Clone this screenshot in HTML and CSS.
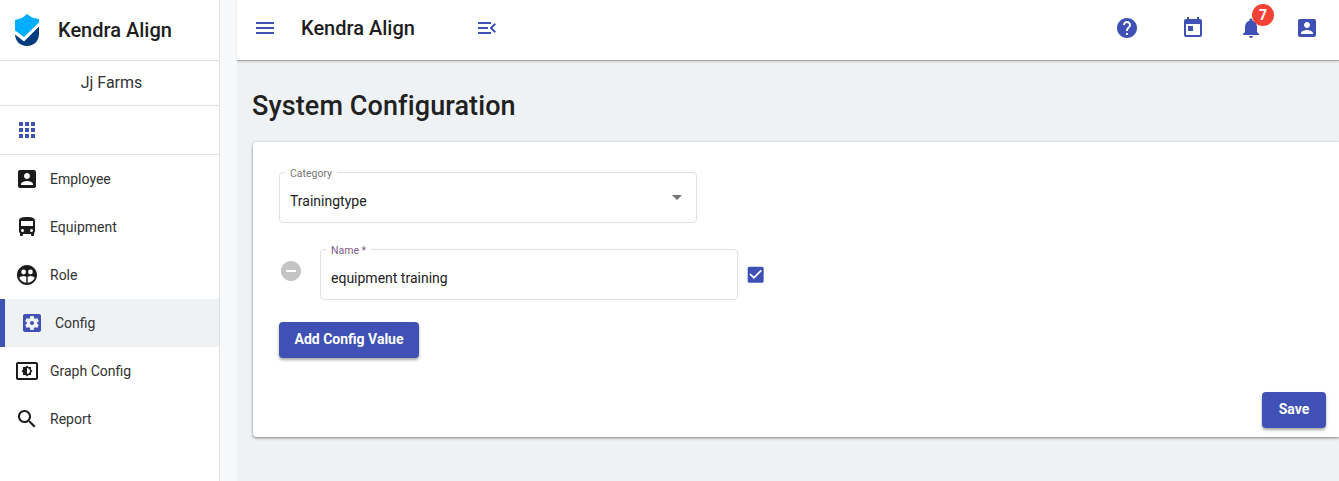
FILE: index.html
```html
<!DOCTYPE html>
<html lang="en">
<head>
<meta charset="utf-8">
<title>System Configuration</title>
<link rel="stylesheet" href="styles.css">
</head>
<body>
<div class="app">
  <aside class="sidebar">
    <div class="brand">
      <svg class="logo" viewBox="0 0 24 32"><path fill="#00aeff" d="M12 0l5 3.500 7 1.500v3.500L9 23 0 16.500V6l7-2z"/><path fill="#003b7d" d="M0 20.500l9 7L24 12.500V20c0 7-5 12-12 12S0 27 0 20z"/></svg>
      <span class="brand-name">Kendra Align</span>
    </div>
    <div class="farm">Jj Farms</div>
    <div class="apps"><svg class="icon indigo" viewBox="0 0 24 24"><path d="M4 8h4V4H4v4zm6 12h4v-4h-4v4zm-6 0h4v-4H4v4zm0-6h4v-4H4v4zm6 0h4v-4h-4v4zm6-10v4h4V4h-4zm-6 4h4V4h-4v4zm6 6h4v-4h-4v4zm0 6h4v-4h-4v4z"/></svg></div>
    <nav class="nav">
      <a class="nav-item"><svg class="icon" viewBox="0 0 24 24"><path d="M3 5v14c0 1.100.89 2 2 2h14c1.100 0 2-.9 2-2V5c0-1.100-.9-2-2-2H5c-1.110 0-2 .9-2 2zm12 4c0 1.660-1.340 3-3 3s-3-1.340-3-3 1.340-3 3-3 3 1.340 3 3zm-9 8c0-2 4-3.100 6-3.100s6 1.100 6 3.100v1H6v-1z"/></svg><span>Employee</span></a>
      <a class="nav-item"><svg class="icon" viewBox="0 0 24 24"><path d="M4 16c0 .88.39 1.670 1 2.220V20c0 .55.45 1 1 1h1c.55 0 1-.45 1-1v-1h8v1c0 .55.45 1 1 1h1c.55 0 1-.45 1-1v-1.780c.61-.55 1-1.340 1-2.220V6c0-3.500-3.580-4-8-4s-8 .5-8 4v10zm3.500 1c-.83 0-1.500-.67-1.500-1.500S6.670 14 7.500 14s1.500.67 1.500 1.500S8.330 17 7.500 17zm9 0c-.83 0-1.500-.67-1.500-1.500s.67-1.500 1.500-1.500 1.500.67 1.500 1.500-.67 1.500-1.500 1.500zm1.500-6H6V6h12v5z"/></svg><span>Equipment</span></a>
      <a class="nav-item"><svg class="icon" viewBox="0 0 24 24"><path d="M12 2C6.480 2 2 6.480 2 12s4.480 10 10 10 10-4.480 10-10S17.520 2 12 2zM8.600 6.600a2.400 2.400 0 1 1 0 4.800 2.400 2.400 0 0 1 0-4.800zm6.800 0a2.400 2.400 0 1 1 0 4.800 2.400 2.400 0 0 1 0-4.800zM4.300 15c.7-1.200 2.600-1.900 4.200-1.900 1 0 2 .2 2.800.7v6c-3.200-.3-5.800-2.300-7-4.800zm8.400 4.800v-6c.8-.5 1.800-.7 2.800-.7 1.600 0 3.500.7 4.200 1.900-1.200 2.500-3.800 4.500-7 4.800z"/></svg><span>Role</span></a>
      <a class="nav-item active"><svg class="icon indigo" viewBox="0 0 24 24"><path d="M12 10c-1.100 0-2 .9-2 2s.9 2 2 2 2-.9 2-2-.9-2-2-2zm7-7H5c-1.110 0-2 .9-2 2v14c0 1.100.89 2 2 2h14c1.110 0 2-.9 2-2V5c0-1.100-.89-2-2-2zm-1.750 9c0 .23-.02.46-.05.68l1.480 1.160c.13.11.17.3.08.45l-1.400 2.420c-.09.15-.27.21-.43.15l-1.740-.7c-.36.28-.76.51-1.180.69l-.26 1.850c-.03.17-.18.3-.35.3h-2.800c-.17 0-.32-.13-.35-.29l-.26-1.850c-.43-.18-.82-.41-1.180-.69l-1.740.7c-.16.06-.34 0-.43-.15l-1.400-2.420c-.09-.15-.05-.34.08-.45l1.480-1.160c-.03-.23-.05-.46-.05-.69 0-.23.02-.46.05-.68l-1.480-1.160c-.13-.11-.17-.3-.08-.45l1.400-2.420c.09-.15.27-.21.43-.15l1.740.7c.36-.28.76-.51 1.180-.69l.26-1.850c.03-.17.18-.3.35-.3h2.800c.17 0 .32.13.35.29l.26 1.850c.43.18.82.41 1.180.69l1.740-.7c.16-.06.34 0 .43.15l1.400 2.420c.09.15.05.34-.08.45l-1.480 1.160c.03.23.05.46.05.69z"/></svg><span>Config</span></a>
      <a class="nav-item"><svg class="icon" viewBox="0 0 24 24"><path d="M21 3H3c-1.110 0-2 .89-2 2v14c0 1.110.89 2 2 2h18c1.110 0 2-.89 2-2V5c0-1.110-.89-2-2-2zm0 16.020H3V4.980h18v14.040zM8 16h2.500l1.500 1.500 1.500-1.500H16v-2.500l1.500-1.500-1.500-1.500V8h-2.500L12 6.500 10.500 8H8v2.500L6.500 12 8 13.500V16zm4-7c1.660 0 3 1.340 3 3s-1.340 3-3 3V9z"/></svg><span>Graph Config</span></a>
      <a class="nav-item"><svg class="icon" viewBox="0 0 24 24"><path d="M15.500 14h-.79l-.28-.27C15.410 12.590 16 11.110 16 9.500 16 5.910 13.090 3 9.500 3S3 5.910 3 9.500 5.910 16 9.500 16c1.610 0 3.090-.59 4.230-1.570l.27.28v.79l5 4.990L20.490 19l-4.990-5zm-6 0C7.010 14 5 11.990 5 9.500S7.010 5 9.500 5 14 7.010 14 9.500 11.990 14 9.500 14z"/></svg><span>Report</span></a>
    </nav>
  </aside>
  <div class="gutter"></div>
  <div class="main">
    <header class="topbar">
      <svg class="icon indigo menu" viewBox="0 0 24 24"><path d="M3 18h18v-2H3v2zm0-5h18v-2H3v2zm0-7v2h18V6H3z"/></svg>
      <span class="top-title">Kendra Align</span>
      <svg class="icon indigo collapse" viewBox="0 0 24 24"><path d="M3 18h13v-2H3v2zm0-5h10v-2H3v2zm0-7v2h13V6H3zm18 9.590L17.420 12 21 8.410 19.590 7l-5 5 5 5L21 15.590z"/></svg>
      <div class="top-actions">
        <svg class="icon indigo" viewBox="0 0 24 24"><path d="M12 2C6.480 2 2 6.480 2 12s4.480 10 10 10 10-4.480 10-10S17.520 2 12 2zm1 17h-2v-2h2v2zm2.070-7.750l-.9.92C13.450 12.900 13 13.500 13 15h-2v-.5c0-1.100.45-2.100 1.170-2.830l1.240-1.260c.37-.36.59-.86.59-1.410 0-1.100-.9-2-2-2s-2 .9-2 2H8c0-2.210 1.790-4 4-4s4 1.790 4 4c0 .88-.36 1.680-.93 2.250z"/></svg>
        <svg class="icon indigo action-today" viewBox="0 0 24 24"><path d="M19 3h-1V1h-2v2H8V1H6v2H5c-1.110 0-1.990.9-1.990 2L3 19c0 1.100.89 2 2 2h14c1.100 0 2-.9 2-2V5c0-1.100-.9-2-2-2zm0 16H5V8h14v11zM7 10h5v5H7z"/></svg>
        <div class="bell"><svg class="icon indigo" viewBox="0 0 24 24"><path d="M12 22c1.100 0 2-.9 2-2h-4c0 1.100.89 2 2 2zm6-6v-5c0-3.070-1.640-5.640-4.500-6.320V4c0-.83-.67-1.500-1.500-1.500s-1.500.67-1.500 1.500v.68C7.630 5.360 6 7.920 6 11v5l-2 2v1h16v-1l-2-2z"/></svg><span class="badge">7</span></div>
        <svg class="icon indigo action-account" viewBox="0 0 24 24"><path d="M3 5v14c0 1.100.89 2 2 2h14c1.100 0 2-.9 2-2V5c0-1.100-.9-2-2-2H5c-1.110 0-2 .9-2 2zm12 4c0 1.660-1.340 3-3 3s-3-1.340-3-3 1.340-3 3-3 3 1.340 3 3zm-9 8c0-2 4-3.100 6-3.100s6 1.100 6 3.100v1H6v-1z"/></svg>
      </div>
    </header>
    <main class="content">
      <h1 class="page-title">System Configuration</h1>
      <section class="card">
        <div class="field category">
          <label class="field-label">Category</label>
          <span class="value">Trainingtype</span>
          <span class="caret"></span>
        </div>
        <div class="value-row">
          <svg class="icon remove" viewBox="0 0 24 24"><path d="M12 2C6.480 2 2 6.480 2 12s4.480 10 10 10 10-4.480 10-10S17.520 2 12 2zm5 11H7v-2h10v2z"/></svg>
          <div class="field name">
            <label class="field-label">Name *</label>
            <span class="value">equipment training</span>
          </div>
          <svg class="icon indigo check" viewBox="0 0 24 24"><path d="M19 3H5c-1.110 0-2 .9-2 2v14c0 1.100.89 2 2 2h14c1.110 0 2-.9 2-2V5c0-1.100-.89-2-2-2zm-9 14l-5-5 1.410-1.410L10 14.170l7.590-7.590L19 8l-9 9z"/></svg>
        </div>
        <button class="btn add">Add Config Value</button>
        <div class="card-footer"><button class="btn save">Save</button></div>
      </section>
    </main>
  </div>
</div>
</body>
</html>
```

FILE: styles.css
```css
* { box-sizing: border-box; }
html, body { margin: 0; height: 100%; overflow: hidden; }
body { font-family: Roboto, "Liberation Sans", sans-serif; color: #212121; background: #fff; }
.app { display: flex; height: 481px; }
.icon { width: 24px; height: 24px; fill: #1b1b1b; flex: none; display: block; }
.icon.indigo { fill: #3f51b5; }

.sidebar { width: 220px; flex: none; background: #fff; border-right: 1px solid #e0e0e0; }
.brand { height: 61px; border-bottom: 1px solid #e0e0e0; display: flex; align-items: center; padding-left: 15px; }
.logo { width: 24px; height: 32px; display: block; flex: none; }
.brand-name { font-size: 20px; font-weight: 500; margin-left: 19px; color: #1d1d1d; }
.farm { height: 45px; border-bottom: 1px solid #e0e0e0; display: flex; align-items: center; justify-content: center; font-size: 16px; color: #333; padding: 0 0 2px 4px; }
.apps { height: 49px; border-bottom: 1px solid #e0e0e0; display: flex; align-items: center; padding-left: 15px; }
.nav { display: flex; flex-direction: column; }
.nav-item { height: 48px; display: flex; align-items: center; padding-left: 15px; font-size: 14px; color: #333; }
.nav-item span { margin-left: 11px; }
.nav-item.active { background: #eff2f5; border-left: 5px solid #3f51b5; }

.gutter { width: 17px; flex: none; background: #f7f8fa; }
.main { flex: 1; min-width: 0; display: flex; flex-direction: column; background: #eff2f5; }
.topbar { height: 61px; flex: none; background: #fff; border-bottom: 1px solid #a8a8a8; box-shadow: 0 1px 2px rgba(0,0,0,.15); display: flex; align-items: center; padding: 0 0 4px 16px; }
.top-title { font-size: 20px; font-weight: 500; margin-left: 24px; color: #1d1d1d; }
.collapse { margin-left: 60px; }
.top-actions { margin-left: auto; margin-right: 20px; display: flex; }
.action-today { margin-left: 42px; }
.bell { position: relative; margin-left: 34px; }
.action-account { margin-left: 32px; }
.badge { position: absolute; left: 13px; top: -12px; width: 22px; height: 22px; border-radius: 50%; background: #f44336; color: #fff; font-size: 14px; font-weight: 700; display: flex; align-items: center; justify-content: center; }

.content { flex: 1; padding: 30px 0 0 16px; }
.page-title { margin: 0 0 20px -1px; font-size: 27px; line-height: 31px; font-weight: 500; color: #212121; letter-spacing: .1px; }
.card { height: 295px; background: #fff; border-radius: 4px 0 0 4px; box-shadow: 0 1px 3px rgba(0,0,0,.5); padding: 30px 13px 0 26px; display: flex; flex-direction: column; align-items: flex-start; }
.field { width: 418px; height: 51px; padding: 20px 10px 0; border: 1px solid #e0e0e0; border-radius: 4px; position: relative; flex: none; }
.field-label { position: absolute; left: 5px; top: -5px; padding: 0 5px; background: #fff; font-size: 10.500px; line-height: 12px; color: #757575; }
.name .field-label { color: #7b5b85; }
.value { display: block; font-size: 14px; line-height: 17px; color: #212121; }
.caret { position: absolute; right: 14px; top: 22px; border-left: 5px solid transparent; border-right: 5px solid transparent; border-top: 5px solid #757575; }
.value-row { display: flex; align-items: flex-start; margin-top: 26px; }
.remove { fill: #c4c4c4; margin-top: 10px; }
.name { margin-left: 17px; }
.check { width: 21.330px; height: 21.330px; margin: 15.330px 0 0 7.330px; }
.btn { border: 0; border-radius: 4px; background: #3f51b5; color: #fff; font-family: inherit; font-size: 14px; font-weight: 700; height: 36px; box-shadow: 0 2px 3px rgba(0,0,0,.35); padding: 0 0 2px; flex: none; }
.add { width: 140px; margin-top: 22px; }
.card-footer { margin-top: auto; align-self: stretch; display: flex; justify-content: flex-end; padding-bottom: 9px; }
.save { width: 64px; }
```
